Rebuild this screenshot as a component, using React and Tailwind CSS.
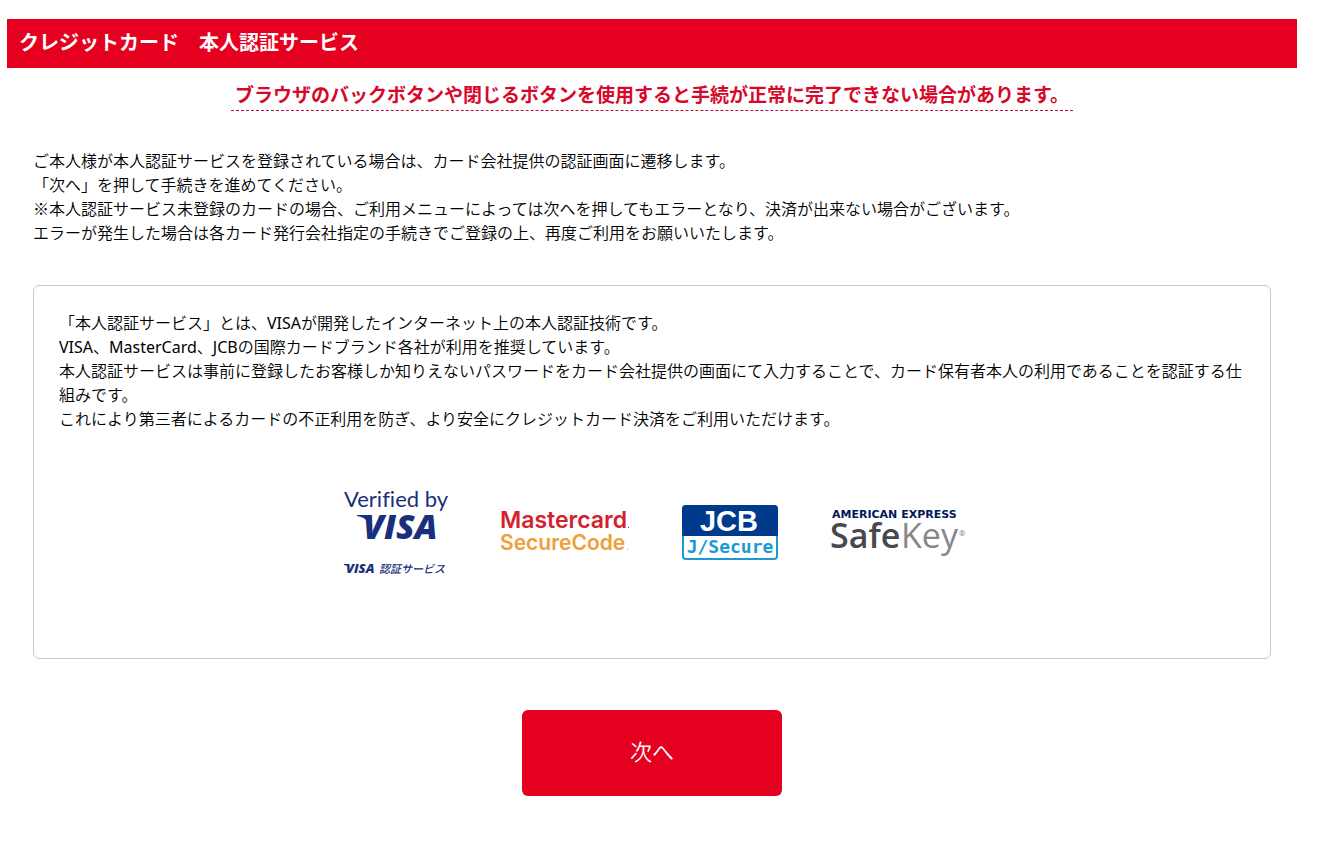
import React from 'react';

const VisaLogo = () => (
  <svg className="overflow-visible" width="104" height="90" viewBox="0 0 104 90" role="img" aria-label="Verified by VISA">
    <g fill="#1a2f7b">
      <text className="[font-variant-ligatures:none]" x="0" y="19" fontFamily="Lato, sans-serif" fontSize="22" fontWeight="400">Verified by</text>
      <path d="M13 27 h14 v6 h-4 q-3 -4 -10 -5z" />
      <text x="19" y="51" fontFamily="'Open Sans', sans-serif" fontSize="34" fontWeight="800" fontStyle="italic">VISA</text>
      <path d="M0 76 h5 v2 h-2 q-1 -1 -3 -1z" />
      <text x="2" y="85" fontFamily="'Open Sans', sans-serif" fontSize="13" fontWeight="800" fontStyle="italic">VISA</text>
      <text x="35" y="85" fontFamily="'Noto Sans CJK JP', sans-serif" fontSize="11" fontWeight="500" fontStyle="italic">認証サービス</text>
    </g>
  </svg>
);

const MastercardLogo = () => (
  <svg className="overflow-visible" width="128" height="46" viewBox="0 0 128 46" role="img" aria-label="Mastercard SecureCode">
    <g fontFamily="Inter, sans-serif">
      <text x="-1" y="18" fill="#d3222f" fontSize="23" fontWeight="600">Mastercard</text>
      <text x="-1" y="40" fill="#eba03a" fontSize="21" fontWeight="600">SecureCode</text>
    </g>
    <rect x="127" y="17" width="1" height="1" fill="#d3222f" />
    <rect x="126" y="39" width="1" height="1" fill="#eba03a" />
  </svg>
);

const JcbLogo = () => (
  <svg className="overflow-visible" width="96" height="56" viewBox="0 0 96 56" role="img" aria-label="JCB J/Secure">
    <rect x="1" y="1" width="94" height="53" rx="3" fill="#fff" stroke="#1b9ad2" strokeWidth="2" />
    <path d="M0 31 V4 Q0 0 4 0 H92 Q96 0 96 4 V31z" fill="#003a8c" />
    <text x="47" y="26" textAnchor="middle" fill="#fff" fontFamily="'Liberation Sans', sans-serif" fontSize="29" fontWeight="700">JCB</text>
    <text x="48" y="48" textAnchor="middle" fill="#1b9ad2" fontFamily="'DejaVu Sans Mono', monospace" fontSize="18" fontWeight="700">J/Secure</text>
  </svg>
);

const SafeKeyLogo = () => (
  <svg className="overflow-visible" width="134" height="46" viewBox="0 0 134 46" role="img" aria-label="American Express SafeKey">
    <text x="1" y="8" fill="#00175a" fontFamily="'DejaVu Sans', sans-serif" fontSize="11" fontWeight="700">AMERICAN EXPRESS</text>
    <text x="-1" y="38" fill="#46484d" fontFamily="'Open Sans', sans-serif" fontSize="34" fontWeight="600">Safe</text>
    <text x="70" y="38" fill="#85878b" fontFamily="'Open Sans', sans-serif" fontSize="34" fontWeight="400">Key</text>
    <text x="128" y="26" fill="#85878b" fontFamily="Roboto, sans-serif" fontSize="8" fontWeight="400">®</text>
  </svg>
);

// Latin brand names sit one step heavier than the Japanese text around them
const Brand = ({ children }) => <span className="font-normal">{children}</span>;

const App = () => {
  return (
    <div className="pt-[19px] pb-12 pl-[7px] pr-5 bg-white text-black text-base leading-6 font-[350] font-['Noto_Sans','Noto_Sans_CJK_JP',sans-serif]">
      <h1 className="bg-[#e6001f] pt-[9px] pb-2.5 px-3 text-white text-xl leading-[30px] font-bold">
        クレジットカード　本人認証サービス
      </h1>

      <main className="px-[26px]">
        {/* Browser back warning */}
        <p className="pt-[13px] text-center">
          <strong className="inline-block border-b border-dashed border-[#b8102f] px-1 text-[19px] leading-[29px] font-bold text-[#d7092b]">
            ブラウザのバックボタンや閉じるボタンを使用すると手続が正常に完了できない場合があります。
          </strong>
        </p>

        <p className="mt-[38px]">
          ご本人様が本人認証サービスを登録されている場合は、カード会社提供の認証画面に遷移します。<br />
          「次へ」を押して手続きを進めてください。<br />
          <span className="leading-none font-['Noto_Sans_CJK_JP',sans-serif]">※</span>本人認証サービス未登録のカードの場合、ご利用メニューによっては次へを押してもエラーとなり、決済が出来ない場合がございます。<br />
          エラーが発生した場合は各カード発行会社指定の手続きでご登録の上、再度ご利用をお願いいたします。
        </p>

        {/* About the service */}
        <section className="mt-10 rounded-md border border-[#c8c8c8] px-[25px] pt-[25px] pb-20">
          <p>
            「本人認証サービス」とは、<Brand>VISA</Brand>が開発したインターネット上の本人認証技術です。<br />
            <Brand>VISA</Brand>、<Brand>MasterCard</Brand>、<Brand>JCB</Brand>の国際カードブランド各社が利用を推奨しています。<br />
            本人認証サービスは事前に登録したお客様しか知りえないパスワードをカード会社提供の画面にて入力することで、カード保有者本人の利用であることを認証する仕組みです。<br />
            これにより第三者によるカードの不正利用を防ぎ、より安全にクレジットカード決済をご利用いただけます。
          </p>
          <div className="mt-[57px] flex flex-wrap items-center justify-center gap-[53px] pl-1">
            <VisaLogo />
            <MastercardLogo />
            <JcbLogo />
            <SafeKeyLogo />
          </div>
        </section>

        <div className="mt-[51px] flex justify-center">
          <button type="button" className="w-[260px] rounded-md bg-[#e6001f] pt-[26px] pb-[30px] text-[22px] leading-[30px] text-white">
            次へ
          </button>
        </div>
      </main>
    </div>
  );
};

export default App;
